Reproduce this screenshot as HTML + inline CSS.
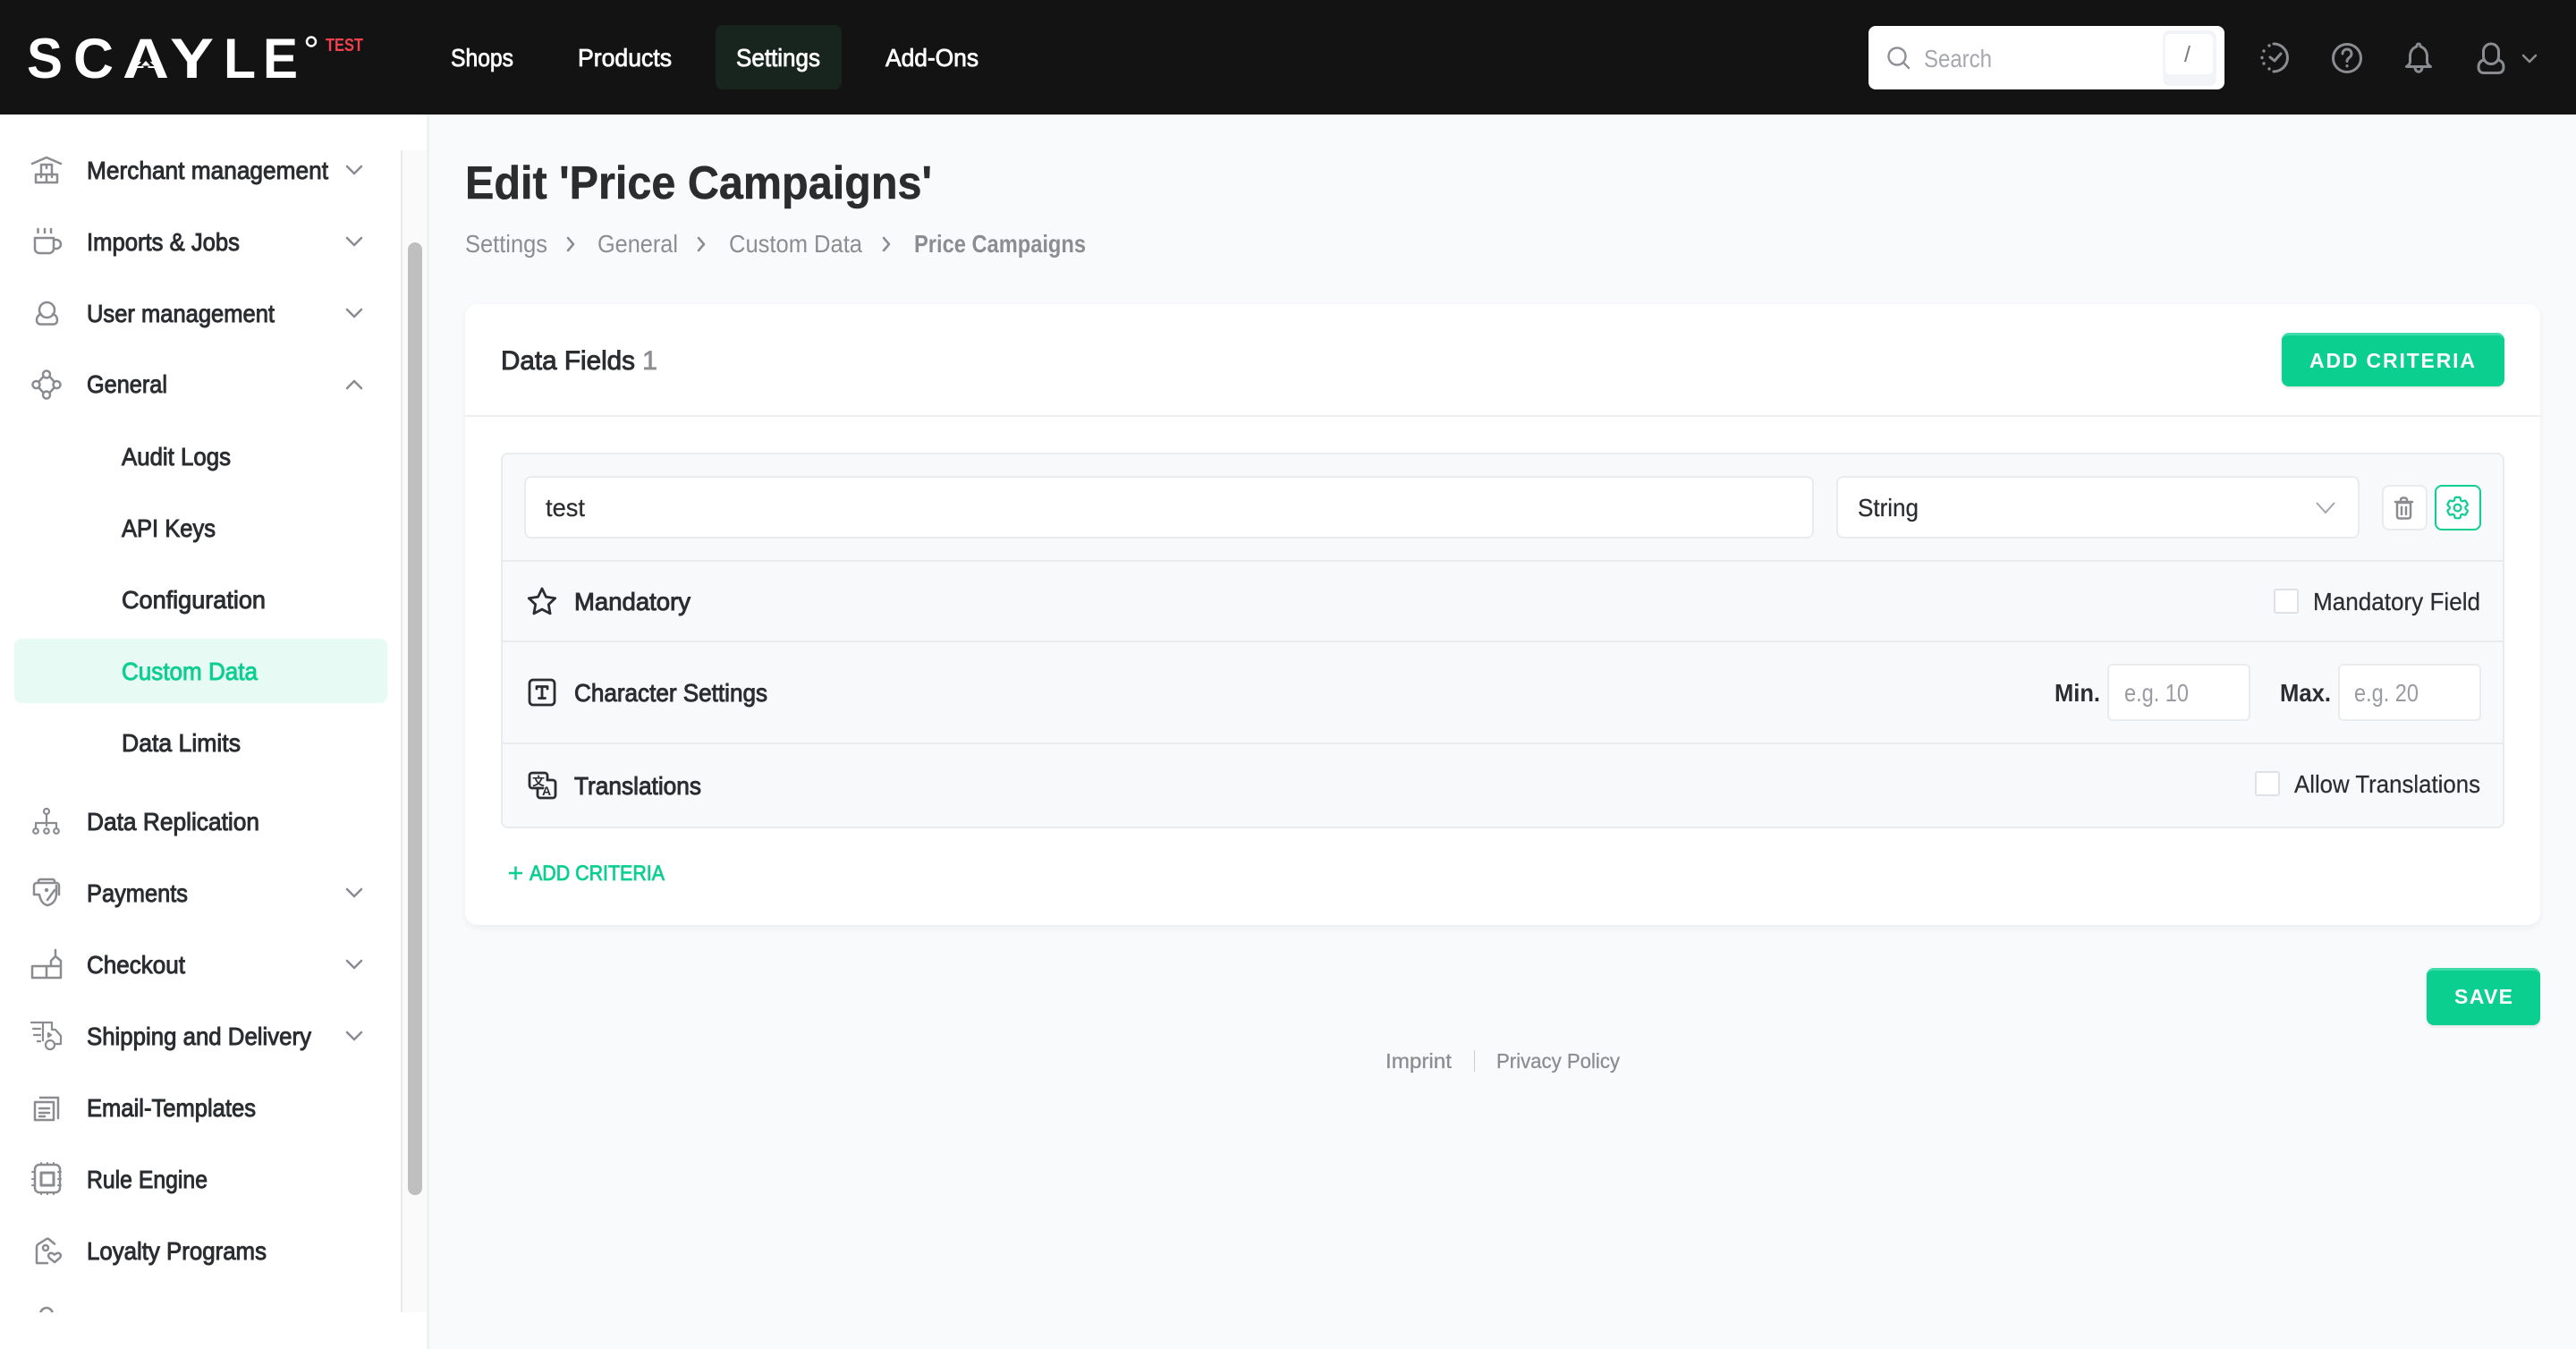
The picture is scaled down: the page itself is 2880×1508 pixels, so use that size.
<!DOCTYPE html>
<html lang="en"><head><meta charset="utf-8"><title>Edit 'Price Campaigns'</title>
<style>
html,body{margin:0;padding:0;width:2880px;height:1508px;overflow:hidden;background:#f9fafc}
body{position:relative;font-family:"Liberation Sans",sans-serif}
.b{position:absolute;box-sizing:border-box}
svg.o{position:absolute;left:0;top:0}
text{font-family:"Liberation Sans","Noto Sans CJK SC",sans-serif;font-size:28px;fill:#2b2d30}
.m{stroke:#2b2d30;stroke-width:.95px}
.r{stroke:#2b2d30;stroke-width:.25px}
.n{fill:#fff;stroke:#fff;stroke-width:.8px}
.g{fill:#8b8d91}
.p{fill:#9a9ca1}
.ic{fill:none;stroke:#8a8c90;stroke-width:2.5;stroke-linecap:round;stroke-linejoin:round}
.dk{fill:none;stroke:#2b2d30;stroke-width:2.8;stroke-linecap:round;stroke-linejoin:round}
.lg{font-size:63px;font-weight:700;fill:#fff}
</style></head><body>
<!-- header -->
<div class="b" style="left:0;top:0;width:2880px;height:128px;background:#131313"></div>
<div class="b" style="left:800px;top:28px;width:141px;height:72px;background:#18251f;border-radius:8px"></div>
<div class="b" style="left:2089px;top:29px;width:398px;height:71px;background:#fff;border-radius:8px"></div>
<div class="b" style="left:2418px;top:34px;width:60px;height:62px;background:#f2f4f7;border-radius:8px"></div>
<div class="b" style="left:2421px;top:38px;width:53px;height:45px;background:#fff;border-radius:6px"></div>
<!-- sidebar -->
<div class="b" style="left:0;top:128px;width:480px;height:1380px;background:#fff;border-right:3px solid #f0f1f3"></div>
<div class="b" style="left:448px;top:168px;width:29px;height:1299px;background:#fafafa;border-left:2px solid #e8e9eb"></div>
<div class="b" style="left:456px;top:271px;width:16px;height:1065px;background:#bfbfbf;border-radius:8px"></div>
<div class="b" style="left:16px;top:714px;width:417px;height:72px;background:#e8faf4;border-radius:8px"></div>
<!-- card -->
<div class="b" style="left:520px;top:340px;width:2320px;height:694px;background:#fff;border-radius:14px;box-shadow:0 3px 8px rgba(30,40,60,.06)"></div>
<div class="b" style="left:520px;top:464px;width:2320px;height:2px;background:#eceef0"></div>
<div class="b" style="left:2551px;top:372px;width:249px;height:60px;background:#0bcf8f;border-radius:8px;border-top:3px solid #3fdcaa;box-shadow:0 2px 3px rgba(0,0,0,.1)"></div>
<div class="b" style="left:560px;top:506px;width:2240px;height:420px;background:#f8f9fb;border:2px solid #e9ebee;border-radius:8px"></div>
<div class="b" style="left:562px;top:626px;width:2236px;height:2px;background:#e9ebee"></div>
<div class="b" style="left:562px;top:716px;width:2236px;height:2px;background:#e9ebee"></div>
<div class="b" style="left:562px;top:830px;width:2236px;height:2px;background:#e9ebee"></div>
<div class="b" style="left:586px;top:532px;width:1442px;height:70px;background:#fff;border:2px solid #e9ebee;border-radius:8px"></div>
<div class="b" style="left:2053px;top:532px;width:585px;height:70px;background:#fff;border:2px solid #e9ebee;border-radius:8px"></div>
<div class="b" style="left:2663px;top:542px;width:51px;height:51px;background:#fff;border:2px solid #e9ebee;border-radius:8px"></div>
<div class="b" style="left:2722px;top:542px;width:52px;height:51px;background:#fff;border:2px solid #0bcf8f;border-radius:8px"></div>
<div class="b" style="left:2542px;top:658px;width:28px;height:28px;background:#fff;border:2px solid #dfe1e6;border-radius:3px"></div>
<div class="b" style="left:2521px;top:862px;width:28px;height:28px;background:#fff;border:2px solid #dfe1e6;border-radius:3px"></div>
<div class="b" style="left:2356px;top:742px;width:160px;height:64px;background:#fff;border:2px solid #e9ebee;border-radius:6px"></div>
<div class="b" style="left:2614px;top:742px;width:160px;height:64px;background:#fff;border:2px solid #e9ebee;border-radius:6px"></div>
<div class="b" style="left:2713px;top:1082px;width:127px;height:64px;background:#0bcf8f;border-radius:8px;border-top:3px solid #3fdcaa;box-shadow:0 2px 3px rgba(0,0,0,.1)"></div>
<div class="b" style="left:1648px;top:1174px;width:1px;height:24px;background:#c9cbcf"></div>

<svg class="o" width="2880" height="1508" viewBox="0 0 2880 1508" xmlns="http://www.w3.org/2000/svg">
<!-- logo -->
<text class="lg" x="30" y="87" textLength="40" lengthAdjust="spacingAndGlyphs">S</text>
<text class="lg" x="82" y="87" textLength="45" lengthAdjust="spacingAndGlyphs">C</text>
<text class="lg" x="137" y="87" textLength="52" lengthAdjust="spacingAndGlyphs">A</text>
<text class="lg" x="190" y="87" textLength="49" lengthAdjust="spacingAndGlyphs">Y</text>
<text class="lg" x="250" y="87" textLength="36" lengthAdjust="spacingAndGlyphs">L</text>
<text class="lg" x="294" y="87" textLength="39" lengthAdjust="spacingAndGlyphs">E</text>
<path d="M160.500 87V74h-7l9.500-10 9.500 10h-7v13z" fill="#131313"/><path d="M163 68l5 5.500h-10z" fill="#fff"/>
<circle cx="348" cy="46.500" r="5" fill="none" stroke="#fff" stroke-width="2.500"/>
<text x="364" y="57" textLength="42" lengthAdjust="spacingAndGlyphs" style="font-size:20px;font-weight:700;fill:#f5414f">TEST</text>
<!-- nav -->
<text class="n" x="504" y="74" textLength="70" lengthAdjust="spacingAndGlyphs">Shops</text>
<text class="n" x="646" y="74" textLength="105" lengthAdjust="spacingAndGlyphs">Products</text>
<text class="n" x="823" y="74" textLength="94" lengthAdjust="spacingAndGlyphs">Settings</text>
<text class="n" x="990" y="74" textLength="104" lengthAdjust="spacingAndGlyphs">Add-Ons</text>
<!-- search -->
<g fill="none" stroke="#8e9095" stroke-width="2.400" stroke-linecap="round"><circle cx="2121" cy="63" r="9.500"/><path d="M2128 70l6 6"/></g>
<text class="p" x="2151" y="75" textLength="76" lengthAdjust="spacingAndGlyphs" style="fill:#a6a8ad">Search</text>
<text x="2442" y="69" style="font-size:25px;fill:#77797e">/</text>
<g class="ic">
<path d="M2542 49a15.500 15.500 0 1 1 0 31" stroke-width="3"/><path d="M2538 64l5 4 7-8" stroke-width="3"/>
<circle cx="2537" cy="51" r="1.700" fill="#8a8c90" stroke="none"/><circle cx="2531" cy="57" r="1.700" fill="#8a8c90" stroke="none"/><circle cx="2529" cy="64.500" r="1.700" fill="#8a8c90" stroke="none"/><circle cx="2531" cy="71" r="1.700" fill="#8a8c90" stroke="none"/><circle cx="2537" cy="77" r="1.700" fill="#8a8c90" stroke="none"/>
<circle cx="2624" cy="65" r="15.500" stroke-width="3"/><path d="M2619 60a5 5 0 1 1 8 4c-2 1.500-3 2.500-3 4.500" stroke-width="3"/><path d="M2624 73.500v.5" stroke-width="3"/>
<path d="M2704 49c-1 0-2 .8-2 2v1c-5 1.500-7.500 6-7.500 11v6c0 2.500-1.500 4-4 5.500h27c-2.500-1.500-4-3-4-5.500v-6c0-5-2.500-9.500-7.500-11v-1c0-1.200-1-2-2-2z" stroke-width="3"/><path d="M2700 75c0 7 8 7 8 0" stroke-width="3"/>
<path d="M2785 49a8.500 8.500 0 0 0 -8.500 9v5a8.500 8.500 0 0 0 17 0v-5a8.500 8.500 0 0 0 -8.500-9z" stroke-width="3"/><path d="M2777 67c-4 1-6 4-6 8 0 4 2 6.500 6 6.500h16c4 0 6-2.500 6-6.500 0-4-2-7-6-8" stroke-width="3"/>
<path d="M2821 62l7 7 7-7"/>
</g>
<!-- sidebar text -->
<text class="m" x="97" y="200" textLength="270" lengthAdjust="spacingAndGlyphs">Merchant management</text>
<text class="m" x="97" y="280" textLength="171" lengthAdjust="spacingAndGlyphs">Imports &amp; Jobs</text>
<text class="m" x="97" y="360" textLength="210" lengthAdjust="spacingAndGlyphs">User management</text>
<text class="m" x="97" y="439" textLength="90" lengthAdjust="spacingAndGlyphs">General</text>
<text class="m" x="136" y="520" textLength="122" lengthAdjust="spacingAndGlyphs">Audit Logs</text>
<text class="m" x="136" y="600" textLength="105" lengthAdjust="spacingAndGlyphs">API Keys</text>
<text class="m" x="136" y="680" textLength="161" lengthAdjust="spacingAndGlyphs">Configuration</text>
<text x="136" y="760" textLength="152" lengthAdjust="spacingAndGlyphs" style="fill:#0bcf8f;stroke:#0bcf8f;stroke-width:.9px">Custom Data</text>
<text class="m" x="136" y="840" textLength="133" lengthAdjust="spacingAndGlyphs">Data Limits</text>
<text class="m" x="97" y="928" textLength="193" lengthAdjust="spacingAndGlyphs">Data Replication</text>
<text class="m" x="97" y="1008" textLength="113" lengthAdjust="spacingAndGlyphs">Payments</text>
<text class="m" x="97" y="1088" textLength="110" lengthAdjust="spacingAndGlyphs">Checkout</text>
<text class="m" x="97" y="1168" textLength="251" lengthAdjust="spacingAndGlyphs">Shipping and Delivery</text>
<text class="m" x="97" y="1248" textLength="189" lengthAdjust="spacingAndGlyphs">Email-Templates</text>
<text class="m" x="97" y="1328" textLength="135" lengthAdjust="spacingAndGlyphs">Rule Engine</text>
<text class="m" x="97" y="1408" textLength="201" lengthAdjust="spacingAndGlyphs">Loyalty Programs</text>
<!-- chevrons -->
<g class="ic"><path d="M388 186l8 8 8-8M388 266l8 8 8-8M388 346l8 8 8-8M388 434l8-8 8 8M388 994l8 8 8-8M388 1074l8 8 8-8M388 1154l8 8 8-8"/></g>
<!-- sidebar icons -->
<g class="ic">
<path d="M36 183l16-7 16 7"/><path d="M46 184h12v11h-12zM40 195h24v9h-24zM52 195v9M52 184v4M46 195v3M58 195v3"/>
<path d="M42.500 256v4M50 256v4M57 256v4"/><path d="M39 266h21v12a5 5 0 0 1 -5 5h-11a5 5 0 0 1 -5-5zM60 268h3a4 4 0 0 1 0 10h-3"/>
<path d="M52.500 338a8.500 8.500 0 0 1 8.500 8.500a8.500 8.500 0 0 1 -17 0a8.500 8.500 0 0 1 8.500-8.500zM46 351c-3 1-5 3.500-5 7 0 3 2 4.500 5 4.500h13c3 0 5-1.500 5-4.500 0-3.500-2-6-5-7"/>
<circle cx="52" cy="418.500" r="4"/><circle cx="52" cy="441.500" r="4"/><circle cx="40.500" cy="430" r="4"/><circle cx="63.500" cy="430" r="4"/><path d="M48.500 421l-5 5.500M55.500 421l5 5.500M48.500 439l-5-5.500M55.500 439l5-5.500"/>
<g stroke-width="2.200"><circle cx="52" cy="907" r="3"/><circle cx="40" cy="929" r="2.800"/><circle cx="52" cy="929" r="2.800"/><circle cx="63" cy="929" r="2.800"/><path d="M52 910v13M40 925v-5h23v5"/></g>
<path d="M38 1000v-10a3 3 0 0 1 3-3h22a3 3 0 0 1 3 3v10M43 987v-2a2 2 0 0 1 2-2h14a2 2 0 0 1 2 2v2M38 1000h6c1 6 4 11 9 12 6-1 10-6 10-13v-9M53 1006l8-11"/><circle cx="52" cy="995" r="2.200" fill="#8a8c90" stroke="none"/>
<path d="M36 1080h16v13h-16zM52 1093h16v-13h-16zM62 1062v6M57 1080v-6l5-5 6 5v6"/>
<g stroke-width="2.200"><path d="M35 1143h13M37 1150h8M38 1157h7M42 1164h3M48 1143v20M48 1143h10v8h4l6 7v9h-6M54 1155l3 2-3 2z"/><circle cx="56" cy="1168" r="5"/></g>
<path d="M39 1232h21v20h-21zM45 1227h20v23M44 1239h11M44 1244h11M44 1248h6"/>
<path d="M45 1302h16a5 5 0 0 1 5 5v21a5 5 0 0 1 -5 5h-18a5 5 0 0 1 -5-5v-21a5 5 0 0 1 5-5z" transform="translate(1 0)"/><path d="M46 1311h14v14h-14z" stroke-width="3"/><path d="M36 1310h3M36 1318h3M36 1325h3M65 1310h3M65 1318h3M65 1325h3M46 1335v-1M53 1335v-1M60 1335v-1M46 1301v-1M53 1301v-1M60 1301v-1" stroke-width="2"/>
<path d="M41 1412v-18c0-2 1-3 3-4l8-5c1-.5 2-.5 3 .5l6 5M41 1412h12"/><circle cx="51" cy="1395" r="3"/><path d="M61 1411l-5.500-4.500c-3-3-.5-7 3-5.500l2.500 1.500 2.500-1.500c3.500-1.500 6 2.500 3 5.500z"/>
</g>
<path d="M45 1468c1-4 4-6 7-6s6 2 7 6" fill="none" stroke="#8a8c90" stroke-width="2.500"/>
<rect x="16" y="1467" width="430" height="10" fill="#fff"/>
<!-- main title -->
<text x="520" y="222" textLength="522" lengthAdjust="spacingAndGlyphs" style="font-size:52px;font-weight:700;fill:#2b2c2e;stroke:#2b2c2e;stroke-width:.5px">Edit 'Price Campaigns'</text>
<text class="g" x="520" y="282" textLength="92" lengthAdjust="spacingAndGlyphs">Settings</text>
<text class="g" x="668" y="282" textLength="90" lengthAdjust="spacingAndGlyphs">General</text>
<text class="g" x="815" y="282" textLength="149" lengthAdjust="spacingAndGlyphs">Custom Data</text>
<text class="g" x="1022" y="282" textLength="192" lengthAdjust="spacingAndGlyphs" style="font-weight:700">Price Campaigns</text>
<g class="ic"><path d="M635 266l6 7-6 7M781 266l6 7-6 7M988 266l6 7-6 7"/></g>
<!-- card content -->
<text class="m" x="560" y="413" textLength="150" lengthAdjust="spacingAndGlyphs" style="font-size:30px">Data Fields</text>
<text class="g" x="718" y="413" textLength="17" lengthAdjust="spacingAndGlyphs" style="font-size:30px;stroke:#8b8d91;stroke-width:.7px">1</text>
<text x="2582" y="411" textLength="185" lengthAdjust="spacing" style="font-size:23px;font-weight:700;fill:#fff">ADD CRITERIA</text>
<text class="r" x="610" y="577" textLength="44" lengthAdjust="spacingAndGlyphs">test</text>
<text class="r" x="2077" y="577" textLength="68" lengthAdjust="spacingAndGlyphs">String</text>
<path d="M2590 562l10 11 10-11" fill="none" stroke="#a3a5aa" stroke-width="2"/>
<g class="ic" stroke-width="2.200"><path d="M2680 562h15v15c0 1.500-1 2.500-2.500 2.500h-10c-1.500 0-2.500-1-2.500-2.500zM2678 561h19M2684 561v-2c0-1.500 1-2.500 2.500-2.500h2c1.500 0 2.500 1 2.500 2.500v2M2685 567v8M2690 567v8"/></g>
<g transform="translate(2732 552) scale(1.3)" fill="none" stroke="#0bcf8f" stroke-width="1.700" stroke-linejoin="round"><path d="M9.594 3.94c.09-.542.56-.94 1.11-.94h2.593c.55 0 1.02.398 1.11.94l.213 1.281c.063.374.313.686.645.87.074.04.147.083.22.127.325.196.72.257 1.075.124l1.217-.456a1.125 1.125 0 0 1 1.37.49l1.296 2.247a1.125 1.125 0 0 1-.26 1.431l-1.003.827c-.293.241-.438.613-.43.992a7.723 7.723 0 0 1 0 .255c-.008.378.137.75.43.991l1.004.827c.424.35.534.955.26 1.43l-1.298 2.247a1.125 1.125 0 0 1-1.369.491l-1.217-.456c-.355-.133-.75-.072-1.076.124a6.47 6.47 0 0 1-.22.128c-.331.183-.581.495-.644.869l-.213 1.281c-.09.543-.56.94-1.11.94h-2.594c-.55 0-1.019-.398-1.11-.94l-.213-1.281c-.062-.374-.312-.686-.644-.87a6.52 6.52 0 0 1-.22-.127c-.325-.196-.72-.257-1.076-.124l-1.217.456a1.125 1.125 0 0 1-1.369-.49l-1.297-2.247a1.125 1.125 0 0 1 .26-1.431l1.004-.827c.292-.24.437-.613.43-.991a6.932 6.932 0 0 1 0-.255c.007-.38-.138-.751-.43-.992l-1.004-.827a1.125 1.125 0 0 1-.26-1.43l1.297-2.247a1.125 1.125 0 0 1 1.37-.491l1.216.456c.356.133.751.072 1.076-.124.072-.044.146-.086.22-.128.332-.183.582-.495.644-.869l.214-1.28Z"/><circle cx="12" cy="12" r="3"/></g>
<!-- rows -->
<path class="dk" d="M606 658l4.500 9.300 10.200 1.400-7.400 7.100 1.800 10.100-9.100-4.800-9.100 4.800 1.800-10.100-7.400-7.100 10.200-1.400z"/>
<text class="m" x="642" y="682" textLength="130" lengthAdjust="spacingAndGlyphs">Mandatory</text>
<rect class="dk" x="592" y="760" width="28" height="28" rx="4"/>
<path class="dk" d="M600 770v-2.500h12v2.500M606 767.500v13M602.500 780.500h7"/>
<text class="m" x="642" y="784" textLength="216" lengthAdjust="spacingAndGlyphs">Character Settings</text>
<path class="dk" d="M607 881h-12a3 3 0 0 1 -3-3v-11a3 3 0 0 1 3-3h14a3 3 0 0 1 3 3v5"/>
<path class="dk" d="M612 872h6a3 3 0 0 1 3 3v14a3 3 0 0 1-3 3h-14a3 3 0 0 1 -3-3v-8"/>
<text x="595" y="878" textLength="14" lengthAdjust="spacingAndGlyphs" style="font-size:13px;font-weight:700;fill:#2b2d30">文</text>
<text x="606" y="889" style="font-size:14px;font-weight:700">A</text>
<text class="m" x="642" y="888" textLength="142" lengthAdjust="spacingAndGlyphs">Translations</text>
<text class="r" x="2586" y="682" textLength="187" lengthAdjust="spacingAndGlyphs">Mandatory Field</text>
<text class="r" x="2565" y="886" textLength="208" lengthAdjust="spacingAndGlyphs">Allow Translations</text>
<text x="2297" y="784" textLength="51" lengthAdjust="spacingAndGlyphs" style="font-weight:700">Min.</text>
<text x="2549" y="784" textLength="57" lengthAdjust="spacingAndGlyphs" style="font-weight:700">Max.</text>
<text class="p" x="2375" y="784" textLength="72" lengthAdjust="spacingAndGlyphs">e.g. 10</text>
<text class="p" x="2632" y="784" textLength="72" lengthAdjust="spacingAndGlyphs">e.g. 20</text>
<path d="M569 976h15M576.500 968.500v15" stroke="#0bcf8f" stroke-width="2.500" fill="none"/>
<text x="592" y="984" textLength="151" lengthAdjust="spacingAndGlyphs" style="font-size:24px;fill:#0bcf8f;stroke:#0bcf8f;stroke-width:.8px">ADD CRITERIA</text>
<text x="2744" y="1122" textLength="65" lengthAdjust="spacing" style="font-size:23px;font-weight:700;fill:#fff">SAVE</text>
<text class="g" x="1549" y="1194" textLength="74" lengthAdjust="spacingAndGlyphs" style="font-size:23px;stroke:#8b8d91;stroke-width:.3px">Imprint</text>
<text class="g" x="1673" y="1194" textLength="138" lengthAdjust="spacingAndGlyphs" style="font-size:23px;stroke:#8b8d91;stroke-width:.3px">Privacy Policy</text>
</svg>
</body></html>
